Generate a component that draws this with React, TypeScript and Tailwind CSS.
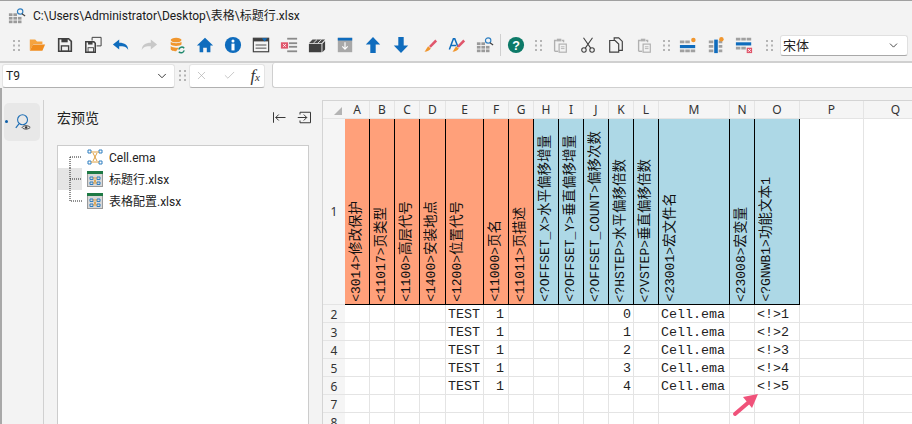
import { ChevronDown, X, Check } from "lucide-react";
import type { ReactNode } from "react";

const UI_FONT = "font-['Roboto','Noto_Sans_CJK_SC',sans-serif]";
const BLUE = "#0f6cbd";
const DARK = "#404040";

const Svg = ({ children, size = 18 }: { children: ReactNode; size?: number }) => (
  <svg width={size} height={size} viewBox="0 0 20 20" fill="none">
    {children}
  </svg>
);

const Grip = () => (
  <svg width="7" height="11" viewBox="0 0 7 11" fill="#b4b4b4">
    <rect x="0" y="0" width="2" height="2" />
    <rect x="5" y="0" width="2" height="2" />
    <rect x="0" y="4.5" width="2" height="2" />
    <rect x="5" y="4.5" width="2" height="2" />
    <rect x="0" y="9" width="2" height="2" />
    <rect x="5" y="9" width="2" height="2" />
  </svg>
);

const GridSearch = ({ size = 18 }: { size?: number }) => (
  <Svg size={size}>
    <g fill="#9a9a9a">
      <rect x="1" y="7" width="4" height="3" />
      <rect x="6" y="7" width="4" height="3" />
      <rect x="1" y="11" width="4" height="3" />
      <rect x="6" y="11" width="4" height="3" />
      <rect x="11" y="11" width="4" height="3" />
      <rect x="1" y="15" width="4" height="3" />
      <rect x="6" y="15" width="4" height="3" />
      <rect x="11" y="15" width="4" height="3" />
    </g>
    <circle cx="13.500" cy="5" r="3" stroke="#2f7fc1" strokeWidth="1.300" />
    <path d="M15.500 7.500l3.500 2.500" stroke={DARK} strokeWidth="1.300" />
  </Svg>
);

const PasteIcon = () => (
  <Svg>
    <path d="M4 17V5h2.500M12 5h2v2" stroke="#b0b0b0" strokeWidth="1.500" />
    <rect x="6.500" y="3" width="5" height="3" fill="#b0b0b0" />
    <path d="M4 17h4" stroke="#b0b0b0" strokeWidth="1.500" />
    <rect x="9" y="9" width="8" height="9" stroke="#b0b0b0" strokeWidth="1.300" />
    <path d="M11 12h4M11 14h4" stroke="#b0b0b0" />
  </Svg>
);

const BrushIcon = () => (
  <>
    <path d="M10 11l7-7 2 2-7 7z" fill="#e0566b" />
    <path d="M9 11.500l3 2.500c-1 2-4 3.500-7 3.500 1.500-1.500 2.500-4 4-6z" fill="#f0962e" />
  </>
);

const TOOLS: ReactNode[] = [
  <Svg key="open">
    <path d="M2 4h6l2 2h6v3H6l-4 7z" fill="#f5a340" />
    <path d="M5.500 9.500H19L16 16.500H2z" fill="#f08c1e" />
  </Svg>,
  <Svg key="save">
    <path d="M3 3h11l3 3v11H3z" stroke={DARK} strokeWidth="1.800" />
    <rect x="6" y="2.500" width="7" height="4.500" fill={DARK} />
    <rect x="6" y="11" width="8" height="6" stroke={DARK} strokeWidth="1.500" />
  </Svg>,
  <Svg key="saveas">
    <path d="M2 6.500h9l1.500 1.500v10H2z" stroke={DARK} strokeWidth="1.700" />
    <rect x="4.500" y="6" width="5" height="3.500" fill={DARK} />
    <rect x="4.500" y="13" width="6" height="5" stroke={DARK} />
    <path d="M9 5V1.500h10V11h-5" stroke={DARK} strokeWidth="1.100" />
  </Svg>,
  <Svg key="undo">
    <path d="M8 4v3.500c6 0 10 2.500 10 8-2-3.500-5-4-10-4V15L1 9.500z" fill={BLUE} />
  </Svg>,
  <Svg key="redo">
    <path d="M12 4v3.500c-6 0-10 2.500-10 8 2-3.500 5-4 10-4V15l7-5.500z" fill="#c8c8c8" />
  </Svg>,
  <Svg key="db">
    <ellipse cx="9" cy="4.500" rx="6" ry="2.500" fill="#f0962e" />
    <path d="M3 6.500c1 2 11 2 12 0v3c-1 2-11 2-12 0zM3 11c1 2 8 2 9 2l-3 4c-3 0-6-1-6-2.500z" fill="#f0962e" />
    <path d="M12 15a3.500 3.500 0 0 1 6-1.500M18 16a3.500 3.500 0 0 1-6 1.500" stroke="#218a6e" strokeWidth="1.600" />
  </Svg>,
  <Svg key="home">
    <path d="M10 2l9 8.500h-3V18h-4v-5H8v5H4v-7.500H1z" fill={BLUE} />
  </Svg>,
  <Svg key="info">
    <circle cx="10" cy="10" r="9" fill={BLUE} />
    <circle cx="10" cy="5.500" r="1.700" fill="#fff" />
    <rect x="8.300" y="8.500" width="3.400" height="7.500" fill="#fff" />
  </Svg>,
  <Svg key="form">
    <rect x="1.500" y="2.500" width="17" height="15" stroke={DARK} strokeWidth="1.300" />
    <rect x="1.500" y="2.500" width="17" height="3.500" fill={DARK} />
    <path d="M11 2.500h6l-3 3.500z" fill={BLUE} />
    <path d="M4 10h12M4 13.500h12" stroke={DARK} />
  </Svg>,
  <Svg key="excel">
    <rect x="1" y="7" width="8" height="7" fill="#e0566b" />
    <path d="M3.500 9l3 3M6.500 9l-3 3" stroke="#fff" />
    <g fill="#8a8a8a">
      <rect x="8" y="2" width="11" height="2" />
      <rect x="10" y="7" width="9" height="2" />
      <rect x="10" y="11" width="9" height="2" />
      <rect x="8" y="16" width="11" height="2" />
    </g>
  </Svg>,
  <Svg key="cube">
    <path d="M1 8l4-4h14l-4 4z" fill="#4a4a4a" />
    <path d="M1 9h14v9H1zM16 8.500l3-3V15l-3 3z" fill={DARK} />
    <path d="M6 8l4-4M11 8l4-4" stroke="#f3f3f3" strokeWidth="1" />
  </Svg>,
  <Svg key="downbox">
    <rect x="2" y="2" width="16" height="16" fill="#a8a8a8" />
    <rect x="2" y="2" width="16" height="3" fill={BLUE} />
    <path d="M10 7v7.500M7 11.500l3 3 3-3" stroke="#fff" strokeWidth="1.300" />
  </Svg>,
  <Svg key="up">
    <path d="M10 1l8 8.500h-5V19H7V9.500H2z" fill={BLUE} />
  </Svg>,
  <Svg key="down">
    <path d="M10 19l8-8.500h-5V1H7v9.500H2z" fill={BLUE} />
  </Svg>,
  <Svg key="brush">
    <BrushIcon />
  </Svg>,
  <Svg key="abrush">
    <path d="M1.500 15L6 3h1.500L11 12M3.500 10.500h5.500" stroke={BLUE} strokeWidth="1.700" />
    <BrushIcon />
  </Svg>,
  <GridSearch key="gridsearch" />,
];

const Tool = ({ children }: { children: ReactNode }) => (
  <div className="flex h-7 w-7 items-center justify-center">{children}</div>
);

const InsertIcon = ({ col }: { col?: boolean }) => (
  <Svg>
    {col ? (
      <>
        <path d="M2 5h5v3H2zM2 10h5v3H2zM2 15h5v3H2zM13 5h4v3h-4zM13 10h4v3h-4zM13 15h4v3h-4z" fill="#a0a0a0" />
        <rect x="8" y="4" width="4" height="15" fill={BLUE} />
        <circle cx="16" cy="3.500" r="2.500" fill="#f0962e" />
      </>
    ) : (
      <>
        <path d="M1 5h5v3H1zM7 5h5v3H7zM1 15h5v3H1zM7 15h5v3H7zM13 15h5v3h-5z" fill="#a0a0a0" />
        <rect x="1" y="10" width="17" height="3.500" fill={BLUE} />
        <circle cx="16" cy="4.500" r="2.500" fill="#f0962e" />
      </>
    )}
  </Svg>
);

// tag is the half-width part of the heading, label the Chinese part
const COLUMNS = [
  { name: "A", tag: "<3014>", label: "修改保护", fill: "bg-[#ffa07a]" },
  { name: "B", tag: "<11017>", label: "页类型", fill: "bg-[#ffa07a]" },
  { name: "C", tag: "<1100>", label: "高层代号", fill: "bg-[#ffa07a]" },
  { name: "D", tag: "<1400>", label: "安装地点", fill: "bg-[#ffa07a]" },
  { name: "E", tag: "<1200>", label: "位置代号", fill: "bg-[#ffa07a]" },
  { name: "F", tag: "<11000>", label: "页名", fill: "bg-[#ffa07a]" },
  { name: "G", tag: "<11011>", label: "页描述", fill: "bg-[#ffa07a]" },
  { name: "H", tag: "<?OFFSET_X>", label: "水平偏移增量", fill: "bg-[#add8e6]" },
  { name: "I", tag: "<?OFFSET_Y>", label: "垂直偏移增量", fill: "bg-[#add8e6]" },
  { name: "J", tag: "<?OFFSET_COUNT>", label: "偏移次数", fill: "bg-[#add8e6]" },
  { name: "K", tag: "<?HSTEP>", label: "水平偏移倍数", fill: "bg-[#add8e6]" },
  { name: "L", tag: "<?VSTEP>", label: "垂直偏移倍数", fill: "bg-[#add8e6]" },
  { name: "M", tag: "<23001>", label: "宏文件名", fill: "bg-[#add8e6]" },
  { name: "N", tag: "<23008>", label: "宏变量", fill: "bg-[#add8e6]" },
  { name: "O", tag: "<?GNWB1>", label: "功能文本1", fill: "bg-[#add8e6]" },
  { name: "P", tag: "", label: "", fill: "" },
  { name: "Q", tag: "", label: "", fill: "" },
];

const ROWS = [
  { n: 2, k: "0", o: "<!>1" },
  { n: 3, k: "1", o: "<!>2" },
  { n: 4, k: "2", o: "<!>3" },
  { n: 5, k: "3", o: "<!>4" },
  { n: 6, k: "4", o: "<!>5" },
  { n: 7 },
  { n: 8 },
] as { n: number; k?: string; o?: string }[];

const cellText = (col: string, row: { k?: string; o?: string }) => {
  if (!row.k) return "";
  if (col === "E") return "TEST";
  if (col === "F") return "1";
  if (col === "K") return row.k;
  if (col === "M") return "Cell.ema";
  if (col === "O") return row.o;
  return "";
};

const HEADER_CELL =
  "flex items-center justify-center border-b border-[#e4e4e4] bg-[#f5f5f5] font-['Noto_Sans',sans-serif] text-[12px] text-[#333]";

const Sheet = () => (
  <div className="relative flex-1 overflow-hidden border-l border-t border-[#d4d4d4] bg-white">
    <div className="grid w-max grid-cols-[22px_25px_25px_25px_26px_38px_25px_25px_25px_25px_25px_25px_25px_71px_25px_45px_64px_64px] grid-rows-[18px_186px_18px_18px_18px_18px_18px_18px_18px]">
      <div className="flex items-end justify-end border-b border-[#e4e4e4] bg-[#f5f5f5] pb-[3px] pr-[3px]">
        <div className="h-[8px] w-[8px] bg-[#b4b4b4] [clip-path:polygon(100%_0,100%_100%,0_100%)]" />
      </div>
      {COLUMNS.map((c) => (
        <div key={c.name} className={`${HEADER_CELL} border-r pt-px`}>
          {c.name}
        </div>
      ))}

      <div className={`${HEADER_CELL} pt-px`}>1</div>
      {COLUMNS.map((c) => (
        <div
          key={c.name}
          className={
            c.tag
              ? `flex items-end border-b border-r border-black pb-[2px] pl-[3px] ${c.fill}`
              : "border-b border-r border-[#e4e4e4]"
          }
        >
          {c.tag && (
            <span className="rotate-180 whitespace-nowrap font-['Liberation_Mono','Noto_Sans_CJK_SC',monospace] text-[13px] leading-[17px] text-[#111] [text-orientation:sideways] [writing-mode:vertical-rl]">
              {c.tag}
              <span className="text-[13.5px]">{c.label}</span>
            </span>
          )}
        </div>
      ))}

      {ROWS.map((r) => (
        <div key={r.n} className="contents">
          <div className={`${HEADER_CELL} pt-[2px]`}>{r.n}</div>
          {COLUMNS.map((c) => (
            <div
              key={c.name}
              className={`flex items-center overflow-hidden whitespace-nowrap border-b border-r border-[#e4e4e4] pt-[2px] font-['Liberation_Mono','Noto_Sans_CJK_SC',monospace] text-[13.33px] text-[#222] ${
                c.name === "F" ? "justify-end pr-[4px]" : c.name === "K" ? "justify-end pr-[2px]" : "pl-[2px]"
              }`}
            >
              {cellText(c.name, r)}
            </div>
          ))}
        </div>
      ))}
    </div>
    <svg className="absolute left-[409px] top-[291px]" width="28" height="25" viewBox="0 0 28 25" fill="none">
      <path d="M3 22L17 10" stroke="#f0527a" strokeWidth="4" strokeLinecap="round" />
      <path d="M26 2L11 5l9 11z" fill="#f0527a" />
    </svg>
  </div>
);

const TreeIcon = ({ sheet }: { sheet?: boolean }) =>
  sheet ? (
    <svg width="16" height="16" viewBox="0 0 16 16" fill="none">
      <rect x="0.500" y="0.500" width="15" height="15" fill="#d8d8d8" stroke="#9a9a9a" />
      <rect x="0" y="0" width="16" height="3" fill="#1e7a45" />
      <path d="M3 6h3v2.500H3zM10 6h3v2.500h-3zM3 11h3v2.500H3zM10 11h3v2.500h-3z" stroke="#2f7fc1" />
      <path d="M6 7h4M6 12h4M7 8.500l2 3M9 8.500l-2 3" stroke="#e0a040" />
    </svg>
  ) : (
    <svg width="16" height="16" viewBox="0 0 16 16" fill="none">
      <path d="M1 1h3v3H1zM12 1h3v3h-3zM1 12h3v3H1zM12 12h3v3h-3z" stroke="#2f7fc1" />
      <path d="M4 3h8M4 13h8M6 4l4 8M10 4l-4 8" stroke="#e0a040" />
    </svg>
  );

const TREE = [
  { label: "Cell.ema", lines: "M12 11V22M12 11H24", hot: false },
  { label: "标题行.xlsx", lines: "M12 0V22M12 11H24", sheet: true, hot: true },
  { label: "表格配置.xlsx", lines: "M12 0V11H24", sheet: true, hot: false },
];

export default function App() {
  return (
    <div className={`flex h-[424px] w-[912px] flex-col overflow-hidden border-t border-[#a0a0a0] bg-[#f3f3f3] ${UI_FONT}`}>
      <div className="flex h-[30px] shrink-0 items-center gap-[7px] pl-[8px] text-[12px] text-[#1a1a1a]">
        <GridSearch size={18} />
        <span>C:\Users\Administrator\Desktop\表格\标题行.xlsx</span>
      </div>

      <div className="flex h-[30px] shrink-0 items-center pb-[2px]">
        <div className="flex w-[23px] justify-end pr-[3px]">
          <Grip />
        </div>
        {TOOLS.map((t, i) => (
          <Tool key={i}>{t}</Tool>
        ))}
        <div className="mx-px h-[22px] w-px bg-[#cfcfcf]" />
        <Tool>
          <Svg>
            <circle cx="10" cy="10" r="9" fill="#0d7a68" />
            <text x="10" y="15" textAnchor="middle" fontSize="14" fontWeight="700" fill="#fff" fontFamily="Liberation Sans">
              ?
            </text>
          </Svg>
        </Tool>
        <div className="flex w-[16px] justify-center">
          <Grip />
        </div>
        <Tool>
          <PasteIcon />
        </Tool>
        <Tool>
          <Svg>
            <circle cx="5.500" cy="15.500" r="2.500" stroke={DARK} strokeWidth="1.200" />
            <circle cx="14.500" cy="15.500" r="2.500" stroke={DARK} strokeWidth="1.200" />
            <path d="M7 13.500L15 2M13 13.500L5 2" stroke={DARK} strokeWidth="1.200" />
          </Svg>
        </Tool>
        <Tool>
          <Svg>
            <path d="M8 5V2h5l4 4v10h-4" stroke={DARK} strokeWidth="1.300" />
            <path d="M3 5h6l4 4v9H3z" stroke={DARK} strokeWidth="1.300" fill="#f3f3f3" />
          </Svg>
        </Tool>
        <Tool>
          <PasteIcon />
        </Tool>
        <div className="flex w-[16px] justify-center">
          <Grip />
        </div>
        <Tool>
          <InsertIcon />
        </Tool>
        <Tool>
          <InsertIcon col />
        </Tool>
        <Tool>
          <Svg>
            <path d="M1 2h5v3H1zM7 2h5v3H7zM13 2h5v3h-5zM1 12h5v3H1zM7 12h5v3H7z" fill="#a0a0a0" />
            <rect x="1" y="7" width="17" height="3.500" fill={BLUE} />
            <rect x="13" y="13" width="6" height="6" fill="#e0566b" />
            <path d="M14.500 14.500l3 3M17.500 14.500l-3 3" stroke="#fff" />
          </Svg>
        </Tool>
        <div className="flex w-[22px] justify-center">
          <Grip />
        </div>
        <div className="flex h-[21px] w-[128px] items-center justify-between rounded-[3px] border border-[#e0e0e0] border-b-[#a8a8a8] bg-white pl-[2px] pr-[7px] font-['Noto_Sans_CJK_SC',sans-serif] text-[13px] text-[#222]">
          宋体
          <ChevronDown size={13} strokeWidth={1.500} />
        </div>
      </div>

      <div className="flex h-[27px] shrink-0 items-center border-t-2 border-[#d0d0d0]">
        <div className="ml-[2px] flex h-[24px] w-[173px] items-center justify-between rounded-[3px] border border-[#e4e4e4] border-b-[#b0b0b0] bg-white pl-[3px] pr-[5px] text-[12px] text-[#222]">
          T9
          <ChevronDown size={14} strokeWidth={1.500} />
        </div>
        <div className="flex w-[14px] justify-center">
          <Grip />
        </div>
        <div className="flex h-[24px] w-[76px] items-center justify-between rounded-[3px] border border-[#e4e4e4] border-b-[#b0b0b0] bg-white pl-[5px] pr-[4px] text-[#aaa]">
          <X size={13} strokeWidth={1.200} />
          <Check size={13} strokeWidth={1.200} />
          <span className="font-['Liberation_Serif',serif] text-[17px] italic leading-none text-[#333]">
            f<span className="text-[11px]">x</span>
          </span>
        </div>
        <div className="ml-[7px] h-[25px] flex-1 rounded-l-[3px] border-b border-l border-[#cfcfcf] bg-white" />
      </div>

      <div className="flex min-h-0 flex-1 border-l-2 border-[#a8a8a8] pt-[12px]">
        <div className="h-full w-[42px] shrink-0 border-r border-[#d0d0d0] pl-[2px] pt-[3px]">
          <div className="relative flex h-[38px] w-[36px] items-center justify-center rounded-[5px] bg-[#e8e8e8] pl-[1px]">
            <div className="absolute left-[1px] top-[17px] h-[3px] w-[3px] rounded-full bg-[#0f5fa8]" />
            <Svg size={18}>
              <circle cx="9.500" cy="7.500" r="5.500" stroke="#1f6fb5" strokeWidth="1.200" />
              <path d="M5.500 12L2 16.500" stroke="#1f6fb5" strokeWidth="1.300" />
              <path d="M9 16c1.500-2.500 7-2.500 9 0-2 2.500-7.500 2.500-9 0z" fill="#e8e8e8" stroke="#333" />
              <circle cx="13.500" cy="16" r="1.300" fill="#333" />
            </Svg>
          </div>
        </div>

        <div className="flex w-[278px] shrink-0 flex-col px-[13px]">
          <div className="-mr-[3px] mb-[10px] flex h-[35px] shrink-0 items-center justify-between">
            <span className="font-['Noto_Sans_CJK_SC',sans-serif] text-[14px] text-[#222]">宏预览</span>
            <div className="flex items-center gap-[10px]">
              <Svg size={15}>
                <path d="M2 3v14M18 10H5M9 6l-4 4 4 4" stroke="#333" strokeWidth="1.300" />
              </Svg>
              <Svg size={15}>
                <path d="M4 6V3h14v14H4v-3M1 10h12M9 6l4 4-4 4" stroke="#333" strokeWidth="1.300" />
              </Svg>
            </div>
          </div>
          <div className="flex-1 border border-b-0 border-[#cccccc] bg-white">
            {TREE.map((item) => (
              <div key={item.label} className="flex h-[22px] items-center">
                <svg width="24" height="22" viewBox="0 0 24 22" fill="none" className={item.hot ? "bg-[#e5e5e5]" : ""}>
                  <path d={item.lines} stroke="#222" strokeDasharray="1 1" />
                </svg>
                <div className="ml-[5px] flex items-center gap-[6px] text-[12px] text-[#222]">
                  <TreeIcon sheet={item.sheet} />
                  <span className="pt-px">{item.label}</span>
                </div>
              </div>
            ))}
          </div>
        </div>

        <Sheet />
      </div>
    </div>
  );
}
